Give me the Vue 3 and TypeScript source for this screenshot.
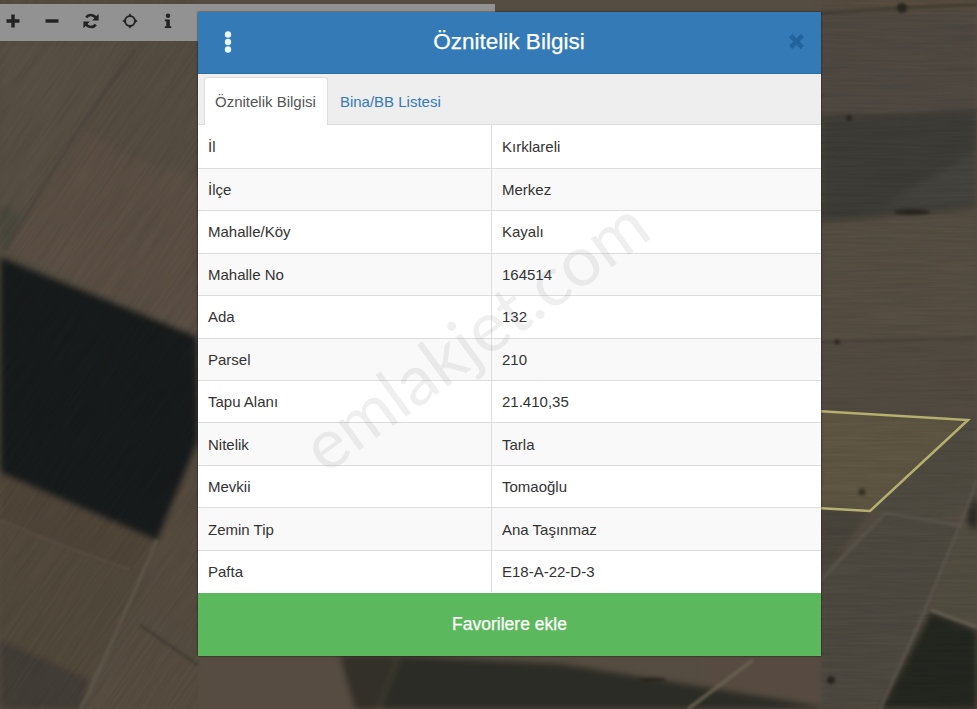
<template>
  <div class="map-page">
    <!-- uydu görüntüsü -->
    <svg class="map-bg" viewBox="0 0 977 709" width="977" height="709" preserveAspectRatio="none">
      <defs>
        <filter id="grainA" x="0" y="0" width="100%" height="100%" color-interpolation-filters="sRGB">
          <feTurbulence type="fractalNoise" baseFrequency="0.015 0.4" numOctaves="3" seed="4" />
          <feColorMatrix values="0 0 0 0 0  0 0 0 0 0  0 0 0 0 0  1.2 0 0 0 -0.4" />
        </filter>
        <filter id="soft" x="-5%" y="-5%" width="110%" height="110%" color-interpolation-filters="sRGB">
          <feGaussianBlur stdDeviation="3" />
        </filter>
        <filter id="line" x="-5%" y="-5%" width="110%" height="110%" color-interpolation-filters="sRGB">
          <feGaussianBlur stdDeviation="1.5" />
        </filter>
        <clipPath id="leftSide"><rect x="0" y="0" width="198" height="709" /></clipPath>
      </defs>
      <rect width="977" height="709" fill="#5a5145" />
      <g filter="url(#soft)">
        <polygon points="0,41 135,41 78,130 28,205 0,205" fill="#5c5347" />
        <polygon points="135,41 198,41 198,140 150,170 85,130" fill="#5a5145" />
        <polygon points="85,130 150,165 198,178 198,337 5,250" fill="#5f5347" />
        <polygon points="0,205 22,216 5,250 0,250" fill="#4e4c41" />
        <polygon points="0,472 157,538 140,605 88,680 0,640" fill="#564c3f" />
        <polygon points="0,472 157,538 130,572 0,520" fill="#54483c" />
        <polygon points="157,540 198,440 198,640 150,610" fill="#5a4f42" />
        <polygon points="135,625 198,665 198,709 90,709" fill="#5b5143" />
        <polygon points="0,640 90,680 82,709 0,709" fill="#46403a" />
        <polygon points="0,257 197,337 198,440 157,540 0,472" fill="#191d1d" />
        <polygon points="198,656 400,656 378,709 198,709" fill="#5a5044" />
        <polygon points="340,656 398,656 378,709 355,709" fill="#35322a" />
        <polygon points="400,656 560,664 704,687 835,708 835,709 380,709" fill="#2d2e27" />
        <polygon points="704,656 821,656 977,656 977,709 835,709 704,687" fill="#5b4f44" />
        <!-- sağ tarlalar -->
        <rect x="821" y="0" width="156" height="12" fill="#5b5042" />
        <rect x="821" y="12" width="156" height="104" fill="#534c45" />
        <polygon points="821,118 977,112 977,208 821,222" fill="#403f3a" />
        <polygon points="885,205 977,150 977,208" fill="#484640" />
        <polygon points="821,222 977,208 977,345 821,345" fill="#5a5246" />
        <polygon points="821,345 977,340 977,430 821,410" fill="#564e44" />
        <polygon points="821,508 870,511 821,580" fill="#4c473f" />
        <polygon points="870,511 968,420 977,430 977,500 940,520" fill="#534e44" />
        <polygon points="821,580 885,513 960,525 925,610 880,709 821,709" fill="#514c44" />
        <polygon points="960,525 977,530 977,627 931,610" fill="#565144" />
        <polygon points="931,612 977,630 977,709 881,709" fill="#262822" />
        <polygon points="977,495 969,510 968,525 977,530" fill="#262722" />
      </g>
      <!-- ekin izleri: sağda yatay, solda çapraz -->
      <rect x="821" y="0" width="156" height="709" filter="url(#grainA)" opacity="0.12" />
      <g clip-path="url(#leftSide)">
        <rect x="-500" y="-300" width="1200" height="1200" filter="url(#grainA)" opacity="0.12" transform="rotate(-55 100 200)" />
      </g>
      <rect width="977" height="709" fill="#000" fill-opacity="0.04" />
      <!-- yollar ve sınırlar -->
      <g fill="none" filter="url(#line)">
        <path d="M135 50 78 130 5 250" stroke="#45403a" stroke-width="2" />
        <path d="M157 540 135 590 88 695 80 709" stroke="#5f5749" stroke-width="3" />
        <path d="M0 520 60 545 130 570" stroke="#574e41" stroke-width="2" />
        <path d="M140 625 198 665" stroke="#3c372f" stroke-width="2" />
        <path d="M688 709 753 660" stroke="#6a6353" stroke-width="3" />
        <path d="M821 13 900 8 977 5" stroke="#38352c" stroke-width="2" />
        <path d="M821 118 977 112" stroke="#3a362f" stroke-width="1.5" />
        <path d="M821 222 977 208" stroke="#423e36" stroke-width="1.5" />
        <path d="M821 342 977 338" stroke="#3b3730" stroke-width="1.5" />
        <path d="M821 580 885 513 960 525 925 610 880 709" stroke="#5d5851" stroke-width="2" />
        <path d="M960 525 977 480" stroke="#5d5851" stroke-width="2" />
        <path d="M931 610 977 627" stroke="#655f52" stroke-width="3" />
      </g>
      <g fill="#28251f" filter="url(#line)">
        <circle cx="902" cy="8" r="5" />
        <circle cx="849" cy="118" r="3" />
        <ellipse cx="912" cy="212" rx="18" ry="3" />
        <circle cx="837" cy="342" r="2.5" />
        <circle cx="862" cy="492" r="3.5" />
        <circle cx="831" cy="680" r="4" />
        <ellipse cx="652" cy="680" rx="14" ry="2" />
      </g>
      <!-- parsel sınırı -->
      <polygon points="800,410 968,420 870,511 800,507" fill="#b4a94e" fill-opacity="0.1" stroke="#b5b070" stroke-width="2.5" />
    </svg>

    <!-- harita araçları -->
    <div class="map-tools">
      <button v-for="tool in tools" :key="tool.name" class="tool-btn" type="button" :title="tool.name">
        <svg viewBox="0 0 16 16" width="16" height="16" v-html="tool.icon"></svg>
      </button>
    </div>

    <div class="modal">
      <div class="modal-head">
        <svg class="menu-icon" viewBox="0 0 8 24" width="8" height="24">
          <circle cx="4" cy="4.5" r="3.2" />
          <circle cx="4" cy="12" r="3.2" />
          <circle cx="4" cy="19.5" r="3.2" />
        </svg>
        <h2 class="modal-title">Öznitelik Bilgisi</h2>
        <svg class="close-icon" viewBox="0 0 16 16" width="17" height="17">
          <path d="M2.5 2.5 13.5 13.5M13.5 2.5 2.5 13.5" />
        </svg>
      </div>

      <div class="tabs">
        <a class="tab active">Öznitelik Bilgisi</a>
        <a class="tab">Bina/BB Listesi</a>
      </div>

      <div class="info-table">
        <div v-for="(row, i) in rows" :key="row[0]" class="info-row" :class="{ odd: i % 2 === 1 }">
          <div class="info-key">{{ row[0] }}</div>
          <div class="info-value">{{ row[1] }}</div>
        </div>
      </div>

      <button class="fav-btn" type="button">Favorilere ekle</button>

      <div class="watermark">emlakjet.com</div>
    </div>
  </div>
</template>

<script setup lang="ts">
interface Tool {
  name: string
  icon: string
}

const tools: Tool[] = [
  { name: 'Yakınlaştır', icon: '<path d="M8 1.5v13M1.5 8h13" stroke="#222" stroke-width="3.4" fill="none"/>' },
  { name: 'Uzaklaştır', icon: '<path d="M1.5 8h13" stroke="#222" stroke-width="3.4" fill="none"/>' },
  {
    name: 'Yenile',
    icon: '<path d="M13.4 6.2A5.8 5.8 0 0 0 3.2 4.4 M2.6 9.8a5.8 5.8 0 0 0 10.2 1.8" stroke="#222" stroke-width="2.6" fill="none"/><path d="M15.6 .8v6.6H9.2zM.4 15.2V8.6h6.4z" fill="#222"/>'
  },
  {
    name: 'Konum',
    icon: '<circle cx="8" cy="8" r="4.9" stroke="#222" stroke-width="1.9" fill="none"/><path d="M8 .2 10 3.4H6zM8 15.8 6 12.6h4zM.2 8 3.4 6v4zM15.8 8 12.6 10V6z" fill="#222"/>'
  },
  {
    name: 'Bilgi',
    icon: '<circle cx="8" cy="2.8" r="2.2" fill="#222"/><path d="M4.8 6.4h5v6.8h1.5V15H4.8v-1.8h1.5V8.2H4.8z" fill="#222"/>'
  }
]

const rows: [string, string][] = [
  ['İl', 'Kırklareli'],
  ['İlçe', 'Merkez'],
  ['Mahalle/Köy', 'Kayalı'],
  ['Mahalle No', '164514'],
  ['Ada', '132'],
  ['Parsel', '210'],
  ['Tapu Alanı', '21.410,35'],
  ['Nitelik', 'Tarla'],
  ['Mevkii', 'Tomaoğlu'],
  ['Zemin Tip', 'Ana Taşınmaz'],
  ['Pafta', 'E18-A-22-D-3']
]
</script>

<style scoped>
.map-page {
  position: relative;
  width: 977px;
  height: 709px;
  overflow: hidden;
  font-family: "Liberation Sans", Arial, sans-serif;
  font-size: 15px;
  color: #333;
}

.map-bg {
  position: absolute;
  left: 0;
  top: 0;
  display: block;
}

.map-tools {
  position: absolute;
  left: 0;
  top: 4px;
  width: 495px;
  height: 37px;
  display: flex;
  background: #929292;
}

.tool-btn {
  width: 38.75px;
  height: 34px;
  padding: 0;
  border: 0;
  background: transparent;
  display: flex;
  align-items: center;
  justify-content: center;
  transform: translateX(-6px);
}

.modal {
  position: relative;
  box-sizing: border-box;
  width: 623px;
  height: 644px;
  margin-left: 198px;
  top: 12px;
  display: flex;
  flex-direction: column;
  overflow: hidden;
  background: #fff;
  box-shadow: 0 0 2px rgba(0, 0, 0, 0.7);
}

.modal-head {
  height: 62px;
  flex: none;
  display: flex;
  align-items: center;
  justify-content: space-between;
  padding: 0 16px 2px 26px;
  background: #337ab7;
  border-bottom: 1px solid #2e6da4;
  box-sizing: border-box;
}

.menu-icon {
  fill: #e8f6ff;
}

.modal-title {
  flex: 1;
  margin: 0;
  text-align: center;
  font-size: 22.5px;
  font-weight: 400;
  color: #fff;
  padding-right: 2px;
  -webkit-text-stroke: 0.25px #fff;
}

.close-icon {
  stroke: #1f5f99;
  stroke-width: 4.2;
  fill: none;
  opacity: 0.85;
}

.tabs {
  height: 52px;
  flex: none;
  box-sizing: border-box;
  display: flex;
  align-items: flex-end;
  padding: 3px 0 0 6px;
  background: #eee;
  border-bottom: 2px solid #ddd;
}

.tab {
  display: flex;
  align-items: center;
  height: 49px;
  padding: 0 11px 0 11px;
  margin-bottom: -2px;
  border: 1px solid transparent;
  box-sizing: border-box;
  color: #337ab7;
}

.tab.active {
  background: #fff;
  color: #555;
  border-color: #ddd #ddd #fff;
  border-radius: 3px 3px 0 0;
  padding-left: 10px;
}

.info-table {
  flex: 1;
  margin-top: -0.64px;
  display: grid;
  grid-auto-rows: 42.44px;
  background: #fff;
}

.info-row {
  display: grid;
  grid-template-columns: 293px 1fr;
  border-top: 1px solid #ddd;
}

.info-row:first-child {
  border-top: 0;
}

.info-row.odd {
  background: #f9f9f9;
}

.info-key,
.info-value {
  display: flex;
  align-items: center;
  padding: 0 10px;
}

.info-value {
  border-left: 1px solid #ddd;
}

.fav-btn {
  height: 63px;
  flex: none;
  border: 0;
  padding: 0;
  background: #5cb85c;
  color: #fff;
  font-family: inherit;
  font-size: 17.5px;
  -webkit-text-stroke: 0.25px #fff;
}

.watermark {
  position: absolute;
  left: 276px;
  top: 322px;
  transform: translate(-50%, -50%) rotate(-36deg);
  font-family: Lato, "Open Sans", sans-serif;
  font-size: 70px;
  white-space: nowrap;
  color: rgba(120, 120, 120, 0.12);
  pointer-events: none;
}
</style>
